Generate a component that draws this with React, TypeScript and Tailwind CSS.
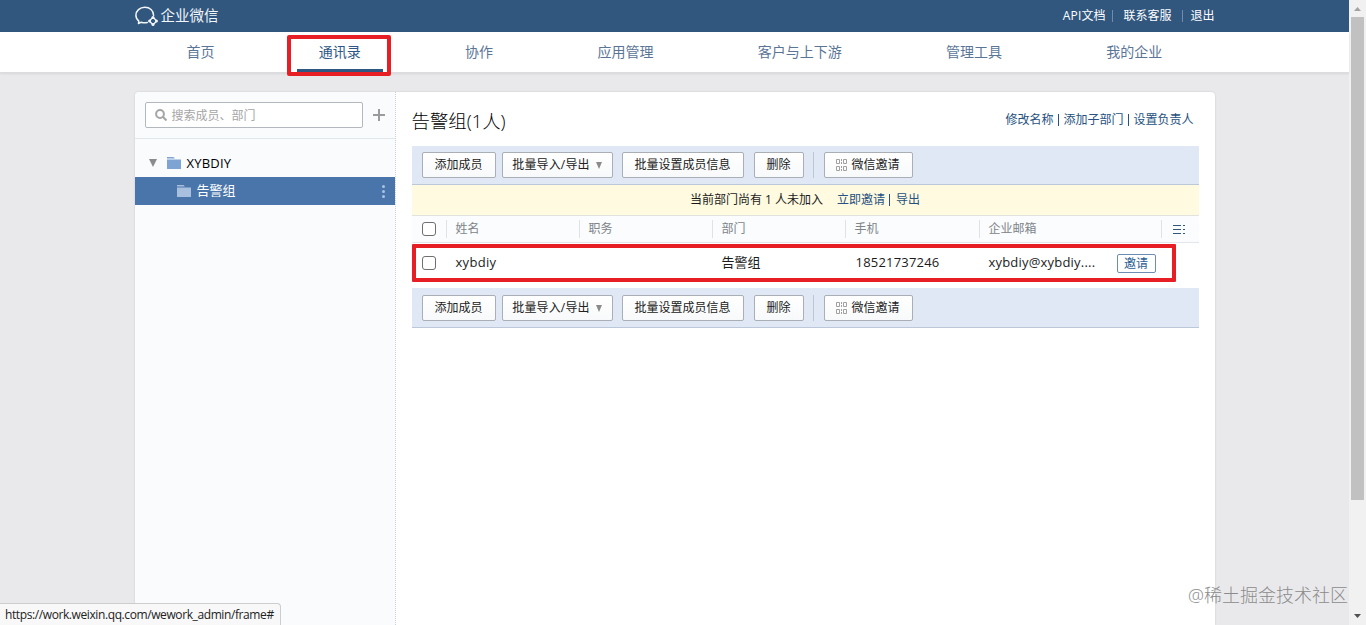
import { useState } from "react";

const navItems = [
  "首页",
  "通讯录",
  "协作",
  "应用管理",
  "客户与上下游",
  "管理工具",
  "我的企业",
];

const columns = [
  { label: "姓名", width: "w-[133px]" },
  { label: "职务", width: "w-[133px]" },
  { label: "部门", width: "w-[133px]" },
  { label: "手机", width: "w-[134px]" },
  { label: "企业邮箱", width: "w-[182px]" },
];

function Logo() {
  return (
    <div className="flex items-center">
      <svg
        width="23"
        height="20"
        viewBox="0 0 23 20"
        fill="none"
        stroke="#f2f6fa"
        strokeWidth="1.5"
        strokeLinecap="round"
        strokeLinejoin="round"
      >
        <path d="M18.600 9.500C18.600 4.500 14.800 1.300 9.800 1.300C4.800 1.300 0.900 4.900 0.900 9.300C0.900 11.700 2 13.700 3.800 15.100L3.500 17.600L6.300 16.200C8.300 16.900 10.300 16.900 12.300 16.500" />
        <path
          d="M18 11.300L21.700 15L18 18.700L14.300 15z"
          strokeWidth="1.300"
        />
        <g fill="#f2f6fa" stroke="none">
          <circle cx="18" cy="11.400" r="1.500" />
          <circle cx="21.400" cy="15" r="1.500" />
          <circle cx="18" cy="18.400" r="1.500" />
          <circle cx="14.600" cy="15" r="1.500" />
        </g>
      </svg>
      <span className="ml-[3px] text-[14.500px] leading-5 text-[#f2f6fa]">
        企业微信
      </span>
    </div>
  );
}

function TopBar() {
  return (
    <header className="h-8 bg-[#31577f]">
      <div className="mx-auto flex h-full w-[1080px] items-center justify-between">
        <Logo />
        <div className="flex items-center text-xs text-white">
          <a>
            <span className="tracking-[0.2px]">API</span>文档
          </a>
          <span className="mr-[10px] ml-[7px] h-3 w-px bg-[#6f8cae]" />
          <a>联系客服</a>
          <span className="mr-[7px] ml-[11px] h-3 w-px bg-[#6f8cae]" />
          <a>退出</a>
        </div>
      </div>
    </header>
  );
}

function Nav() {
  return (
    <nav className="relative box-content h-10 border-b border-[#dcdcde] bg-white shadow-[0_1px_2px_rgba(0,0,0,0.08)]">
      <div className="mx-auto flex h-full w-[1080px] gap-[60.3px] pl-[30px]">
        {navItems.map((item) => {
          const active = item === "通讯录";
          return (
            <a
              key={item}
              className={`relative flex h-full shrink-0 px-[22px] pt-[10px] text-sm leading-5 ${
                active ? "text-[#2f5785]" : "text-[#5b7597]"
              }`}
            >
              {item}
              {active && (
                <>
                  <span className="absolute inset-x-0 bottom-0 h-[3px] bg-[#2e5881]" />
                  <span className="absolute top-[3px] -left-[10px] h-[41px] w-[104px] rounded-[2px] border-4 border-[#e71f25]" />
                </>
              )}
            </a>
          );
        })}
      </div>
    </nav>
  );
}

function FolderIcon({ color }: { color: string }) {
  return (
    <svg width="14" height="12" viewBox="0 0 14 12" fill={color}>
      <path d="M0 0h6.500l1.500 1.500H0zM0 2.500h14V11.500a.5.5 0 0 1-.5.5H.5a.5.5 0 0 1-.5-.5z" />
    </svg>
  );
}

function Sidebar() {
  return (
    <aside className="w-[261px] shrink-0 rounded-tl border-r border-dotted border-[#c9d2dc] bg-[#f9fbfd]">
      <div className="flex h-[47px] items-center border-b border-[#e1e6eb] pl-[10px]">
        <div className="flex h-[26px] w-[218px] items-center rounded-[2px] border border-[#b3b8be] bg-white pl-[9px]">
          <svg
            width="12"
            height="12"
            viewBox="0 0 12 12"
            fill="none"
            stroke="#a5a5a5"
            strokeWidth="2"
          >
            <circle cx="5" cy="5" r="3.900" />
            <path d="M7.800 7.800L11.500 11.500" />
          </svg>
          <span className="ml-[5px] pt-[2px] text-xs text-[#a5a5a5]">
            搜索成员、部门
          </span>
        </div>
        <svg
          className="ml-[10px]"
          width="12"
          height="12"
          viewBox="0 0 12 12"
          stroke="#9a9b9d"
          strokeWidth="2"
        >
          <path d="M6 0v12M0 6h12" />
        </svg>
      </div>
      <div className="pt-[10px] text-[13px]">
        <div className="flex h-7 items-center pl-[14px]">
          <svg width="8" height="8" viewBox="0 0 8 8" fill="#8a8c8e">
            <path d="M0 0h8L4 8z" />
          </svg>
          <span className="mr-[6px] ml-[10px]">
            <FolderIcon color="#7da4d3" />
          </span>
          <span className="pt-px tracking-[0.2px] text-black">XYBDIY</span>
        </div>
        <div className="flex h-7 items-center bg-[#4a75aa] pl-[42px] text-white">
          <FolderIcon color="#a8c0de" />
          <span className="ml-[6px]">告警组</span>
          <span className="mr-[10px] ml-auto flex flex-col gap-[2px]">
            <i className="size-[3px] rounded-full bg-[#a8c4e4]" />
            <i className="size-[3px] rounded-full bg-[#a8c4e4]" />
            <i className="size-[3px] rounded-full bg-[#a8c4e4]" />
          </span>
        </div>
      </div>
    </aside>
  );
}

function ToolButton({
  className,
  children,
}: {
  className: string;
  children: React.ReactNode;
}) {
  return (
    <button
      className={`flex h-[26px] shrink-0 items-center justify-center rounded-[2px] border border-[#a9afb5] bg-gradient-to-b from-white to-[#f8f9fa] text-xs whitespace-nowrap text-[#222] ${className}`}
    >
      {children}
    </button>
  );
}

function QrIcon() {
  return (
    <svg
      className="mr-[4px]"
      width="11"
      height="12"
      viewBox="0 0 11 12"
      fill="none"
      stroke="#a0a0a0"
    >
      <path d="M.5.5h3v4h-3zM7.500.5h3v4h-3zM.5 7.500h3v4h-3zM7.500 7.500h3v4h-3zM5.500 0v2M5.500 3v2M5.500 7v2M5.500 10v2" />
    </svg>
  );
}

function Toolbar({ className }: { className: string }) {
  return (
    <div
      className={`flex items-center border-b border-[#bcc8da] bg-[#dfe8f4] pl-[10px] ${className}`}
    >
      <ToolButton className="w-[74px]">添加成员</ToolButton>
      <ToolButton className="ml-[6px] w-[111px]">
        <span className="tracking-[0.15px]">批量导入/导出</span>
        <svg
          className="ml-[6px]"
          width="6"
          height="7"
          viewBox="0 0 6 7"
          fill="#8b8b8b"
        >
          <path d="M0 0h6L3 7z" />
        </svg>
      </ToolButton>
      <ToolButton className="ml-[9px] w-[122px]">批量设置成员信息</ToolButton>
      <ToolButton className="ml-[10px] w-[50px]">删除</ToolButton>
      <span className="mr-[10px] ml-[9px] h-[26px] w-px bg-[#bdc7d4]" />
      <ToolButton className="w-[89px]">
        <QrIcon />
        微信邀请
      </ToolButton>
    </div>
  );
}

function CheckBox({
  checked,
  onChange,
}: {
  checked: boolean;
  onChange: () => void;
}) {
  return (
    <span className="w-[34px] shrink-0 pl-[10px]">
      <input
        type="checkbox"
        className="block size-[14px] appearance-none rounded-[3px] border border-[#6f6f6f] bg-white checked:bg-[#4a75aa]"
        checked={checked}
        onChange={onChange}
      />
    </span>
  );
}

function MemberTable() {
  const [selected, setSelected] = useState(false);
  const toggle = () => setSelected(!selected);

  return (
    <div>
      <div className="flex h-[27px] items-center border-b border-[#e2e6ea] bg-[#fafcfe] text-xs text-[#808488]">
        <CheckBox checked={selected} onChange={toggle} />
        {columns.map((column) => (
          <span
            key={column.label}
            className={`h-[18px] shrink-0 border-l border-[#dfe3e8] pl-[9px] leading-[18px] ${column.width}`}
          >
            {column.label}
          </span>
        ))}
        <span className="flex h-[18px] grow items-center border-l border-[#dfe3e8] pt-[2px] pl-[11px]">
          <svg width="13" height="10" viewBox="0 0 13 10" fill="#31577f">
            <path d="M0 0h8v1H0zM0 4h8v1H0zM0 8h8v1H0zM10 0h2v1h-2zM10 4h2v1h-2zM10 8h2v1h-2z" />
          </svg>
        </span>
      </div>
      <div className="relative flex h-[45px] items-center pb-[5px] text-[13px] text-[#1c1c1c]">
        <CheckBox checked={selected} onChange={toggle} />
        <span className="w-[266px] pl-[10px] tracking-[0.3px]">xybdiy</span>
        <span className="w-[133px] pl-[10px]">告警组</span>
        <span className="w-[134px] pl-[11px] tracking-[0.2px]">
          18521737246
        </span>
        <span className="w-[138px] pl-[10px] tracking-[0.2px] whitespace-nowrap">
          xybdiy@xybdiy....
        </span>
        <button className="flex h-[19px] w-[39px] items-center justify-center rounded-[2px] border border-[#6d8eb4] bg-white pt-px text-xs text-[#2b5c92]">
          邀请
        </button>
        <span className="pointer-events-none absolute top-[1px] left-0 h-[38px] w-[764px] rounded-[1px] border-4 border-[#e71f25]" />
      </div>
    </div>
  );
}

function Content() {
  return (
    <main className="min-w-0 flex-1 pr-4 pl-4">
      <div className="flex h-[54px] items-center justify-between pt-1">
        <h1 className="text-[18.4px] font-light text-black">告警组(1人)</h1>
        <div className="flex items-center pr-[5px] pb-[2px] text-xs text-[#265180]">
          <a>修改名称</a>
          <span className="mr-1 ml-[5px] h-3 w-px bg-[#265180]" />
          <a>添加子部门</a>
          <span className="mr-1 ml-[5px] h-3 w-px bg-[#265180]" />
          <a>设置负责人</a>
        </div>
      </div>
      <Toolbar className="h-[39px]" />
      <div className="flex h-[31px] items-center justify-center border-b border-[#e2e3df] bg-[#fffae0] text-xs text-[#1a1a1a]">
        <span>当前部门尚有 1 人未加入</span>
        <a className="ml-[14px] text-[#265180]">立即邀请</a>
        <span className="mr-[6px] ml-1 h-3 w-px bg-[#265180]" />
        <a className="text-[#265180]">导出</a>
      </div>
      <MemberTable />
      <Toolbar className="h-10 pt-px" />
    </main>
  );
}

function Scrollbar() {
  return (
    <div className="flex w-[17px] shrink-0 flex-col items-center bg-[#f1f1f1]">
      <svg width="17" height="17" viewBox="0 0 17 17" fill="#a3a3a3">
        <path d="M5 11h7L8.500 7z" />
      </svg>
      <div className="h-[483px] w-[13px] bg-[#c1c1c1]" />
      <svg
        className="mt-auto"
        width="17"
        height="17"
        viewBox="0 0 17 17"
        fill="#505050"
      >
        <path d="M5 6h7l-3.500 4z" />
      </svg>
    </div>
  );
}

export default function App() {
  return (
    <div className="relative flex h-[625px] w-[1366px] overflow-hidden bg-[#e9e9eb] font-['Open_Sans','Noto_Sans_CJK_SC',sans-serif]">
      <div className="flex min-w-0 flex-1 flex-col">
        <TopBar />
        <Nav />
        <div className="mx-auto mt-[19px] flex w-[1080px] flex-1 rounded-t bg-white shadow-[0_0_2px_rgba(0,0,0,0.15)]">
          <Sidebar />
          <Content />
        </div>
      </div>
      <Scrollbar />
      <div className="absolute bottom-0 left-0 flex h-[22px] w-[281px] items-center rounded-tr border-t border-r border-[#cdcdcf] bg-[#f8f8f9] pl-[5px] text-xs tracking-[-0.4px] whitespace-nowrap text-[#222]">
        https://work.weixin.qq.com/wework_admin/frame#
      </div>
      <div className="absolute right-[18px] bottom-[16px] text-[18px] leading-7 font-light whitespace-nowrap text-[#8b8b8c]">
        @稀土掘金技术社区
      </div>
    </div>
  );
}
